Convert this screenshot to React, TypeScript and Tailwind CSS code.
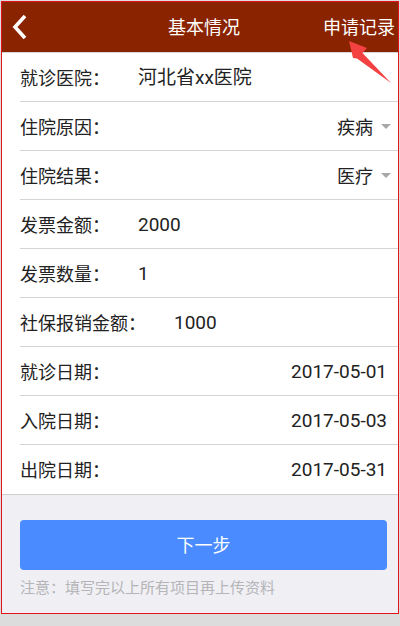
import React from "react";

type Row = { label: string; value: string; align?: "left" | "right"; select?: boolean };

const rows: Row[] = [
  { label: "就诊医院：", value: "河北省xx医院" },
  { label: "住院原因：", value: "疾病", align: "right", select: true },
  { label: "住院结果：", value: "医疗", align: "right", select: true },
  { label: "发票金额：", value: "2000" },
  { label: "发票数量：", value: "1" },
  { label: "社保报销金额：", value: "1000" },
  { label: "就诊日期：", value: "2017-05-01", align: "right" },
  { label: "入院日期：", value: "2017-05-03", align: "right" },
  { label: "出院日期：", value: "2017-05-31", align: "right" },
];

function Caret() {
  return (
    <svg width="10" height="6" viewBox="0 0 10 6" className="ml-[8px] mr-[-4px]">
      <polygon points="0,0 10,0 5,5" fill="#a8a8a8" />
    </svg>
  );
}

export default function App() {
  return (
    <div
      className="relative w-[400px] h-[626px] bg-[#dcdcdc] overflow-hidden"
      style={{ fontFamily: 'Roboto, "Noto Sans CJK SC", sans-serif' }}
    >
      <div className="ml-px mt-px w-[398px] h-[613px] border border-[#e3151a] bg-[#efeff4] flex flex-col">
        {/* Header */}
        <div className="h-[50px] bg-[#8a2300] grid grid-cols-[1fr_auto_1fr] items-center border-b border-[#d6d6d6] box-content">
          <div className="pl-[9px] flex items-center">
            <svg width="18" height="26" viewBox="0 0 18 26">
              <polyline points="14,2 4,13 14,24" fill="none" stroke="#fff" strokeWidth="3.6" strokeLinejoin="miter" />
            </svg>
          </div>
          <div className="pl-[8px] text-white text-[18px]">基本情况</div>
          <div className="flex justify-end pr-[3px] text-white text-[18px]">申请记录</div>
        </div>

        {/* Form rows */}
        <div className="bg-white border-b border-[#cfcfcf]">
          {rows.map((r, i) => (
            <div
              key={i}
              className={`ml-[18px] h-[49px] flex items-center pt-[2px] pr-[11px] text-[18px] text-[#222] ${
                i < rows.length - 1 ? "border-b border-[#d4d4d4]" : ""
              }`}
            >
              <span>{r.label}</span>
              {r.align === "right" ? (
                <span className="ml-auto flex items-center text-[19px]">
                  <span className={r.select ? "text-[18px]" : ""}>{r.value}</span>
                  {r.select && <Caret />}
                </span>
              ) : (
                <span className="ml-[28px] text-[19px]">{r.value}</span>
              )}
            </div>
          ))}
        </div>

        {/* Action */}
        <div className="pt-[25px] pl-[18px]">
          <button className="w-[367px] h-[50px] rounded-[4px] bg-[#4a8cff] text-white text-[18px]">
            下一步
          </button>
          <p className="mt-[7px] text-[15px] text-[#b5b5b8]">注意：填写完以上所有项目再上传资料</p>
        </div>
      </div>

      {/* annotation arrow */}
      <svg className="absolute left-0 top-0" width="400" height="100" viewBox="0 0 400 100">
        <polygon points="349,41 367,48 362.5,53 391,83 357,58.5 353,58" fill="#f44141" />
      </svg>
    </div>
  );
}
